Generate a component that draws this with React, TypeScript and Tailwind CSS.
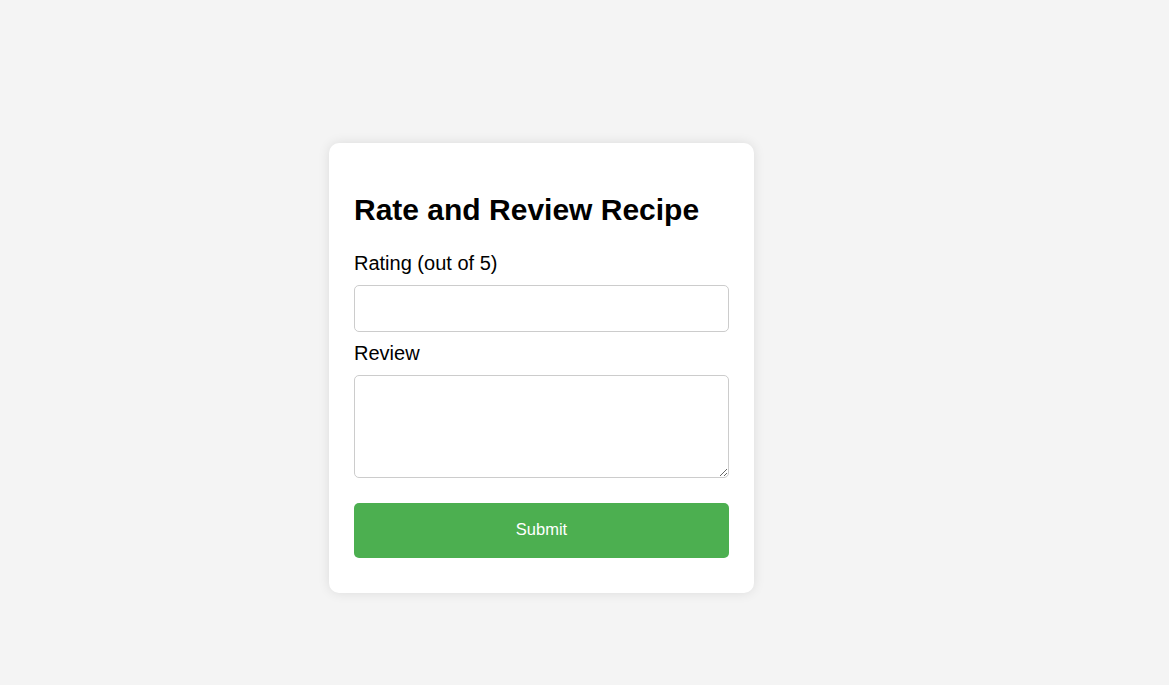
import React from "react";

export default function App() {
  return (
    <div className="min-h-[685px] bg-[#f4f4f4] pl-[329px] pt-[143px] font-['Liberation_Sans',Arial,sans-serif] text-black">
      <div className="w-[425px] rounded-[10px] bg-white p-[25px] shadow-[0_0_12px_rgba(0,0,0,0.1)]">
        <h2 className="mt-[25px] mb-[25px] text-[30px] font-bold leading-[34px]">
          Rate and Review Recipe
        </h2>
        <form onSubmit={(e) => e.preventDefault()}>
          <label className="block text-[20px] leading-[23px]">
            Rating (out of 5)
          </label>
          <input
            type="number"
            min="1"
            max="5"
            className="mt-[10px] mb-[10px] block h-[47px] w-full rounded-[5px] border border-[#cccccc] px-[12px] text-[20px] outline-none"
          />
          <label className="block text-[20px] leading-[23px]">Review</label>
          <textarea className="mt-[10px] block h-[103px] w-full rounded-[5px] border border-[#cccccc] px-[12px] py-[8px] text-[20px] outline-none" />
          <button
            type="submit"
            className="mt-[25px] mb-[10px] block h-[55px] w-full rounded-[5px] bg-[#4caf50] pb-[2px] text-[16.5px] text-white"
          >
            Submit
          </button>
        </form>
      </div>
    </div>
  );
}
